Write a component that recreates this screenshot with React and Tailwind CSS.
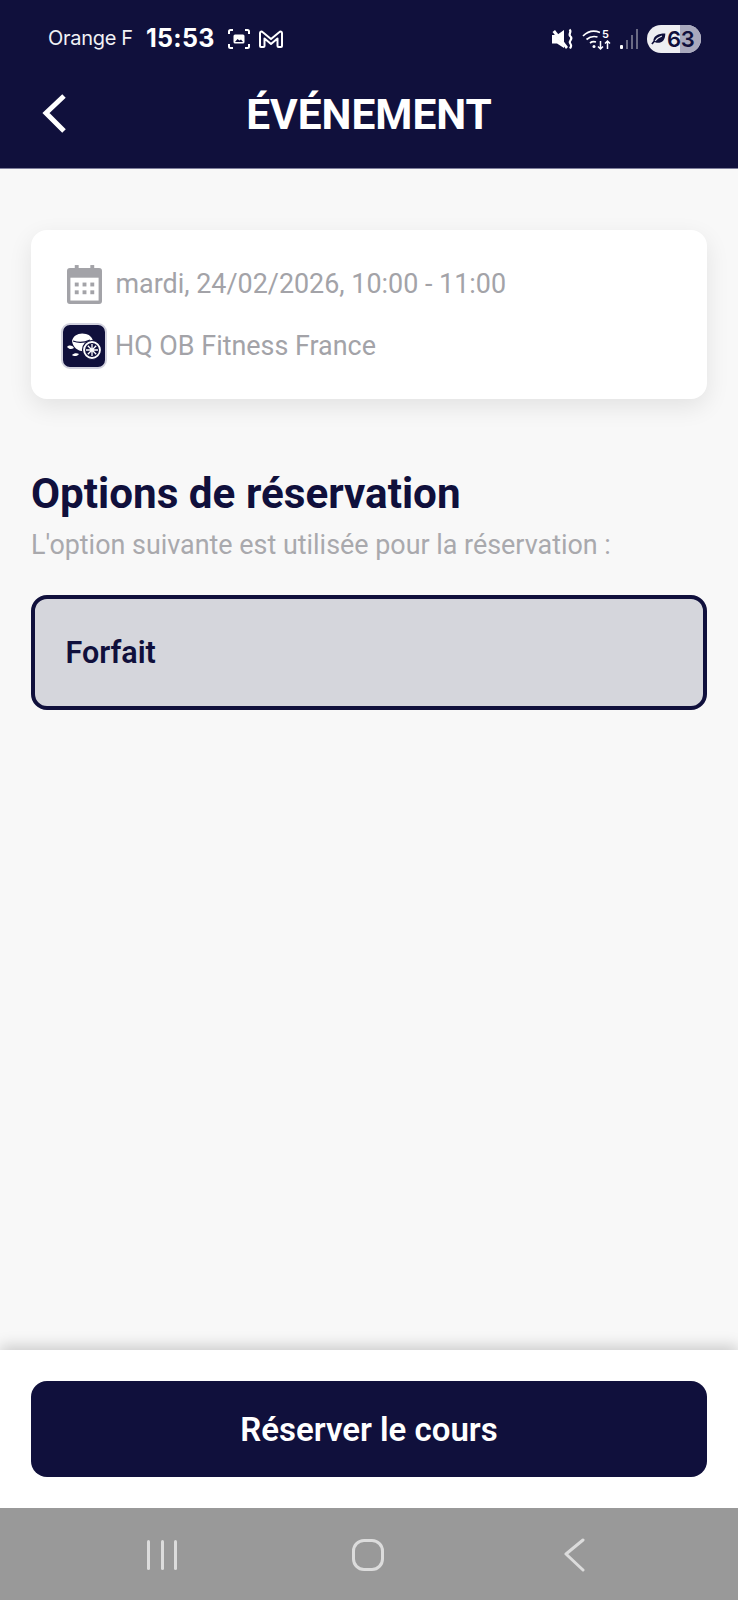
import React from 'react';

const StatusBar = () => (
  <div className="flex items-center justify-between h-[76px] pl-[48px] pr-[37px] pt-[1px]">
    <div className="flex items-center">
      <span className="font-['Inter'] text-[20px] tracking-[-0.3px] text-[#f1f1f5] w-[98px] mt-[-2px]">Orange F</span>
      <span className="font-['Inter'] text-[25px] font-bold tracking-[0.3px] text-white w-[80px]">15:53</span>
      <svg width="24" height="24" viewBox="0 0 24 24" fill="none" stroke="white" strokeWidth="2" className="ml-[1px]">
        <path d="M2 7V4.500A1.500 1.500 0 0 1 3.500 3H6M18 3h2.500A1.500 1.500 0 0 1 22 4.500V7M22 17v2.500a1.500 1.500 0 0 1-1.500 1.500H18M6 21H3.500A1.500 1.500 0 0 1 2 19.500V17" />
        <rect x="6.500" y="7.500" width="11" height="9" rx="1.500" fill="white" stroke="none" />
        <path d="M8 15l2.500-3 2 1.500 1.500-1 2 2.500z" fill="#10103c" stroke="none" />
      </svg>
      <svg width="26" height="20" viewBox="0 0 26 20" fill="none" stroke="white" strokeWidth="2" strokeLinejoin="round" className="ml-[7px]">
        <path d="M2 17V4a1.500 1.500 0 0 1 2.500-1L13 10l8.500-7A1.500 1.500 0 0 1 24 4v13a1 1 0 0 1-1 1h-2.500a1 1 0 0 1-1-1V9.500L13 15l-6.500-5.500V17a1 1 0 0 1-1 1H3a1 1 0 0 1-1-1z" />
      </svg>
    </div>
    <div className="flex items-center">
      <svg width="24" height="24" viewBox="0 0 24 24" className="mr-[6px]">
        <path d="M0 8h5l7-5v18l-7-4.500H0z" fill="white" />
        <path d="M0 2l15 19" stroke="#10103c" strokeWidth="2" />
        <path d="M0.500 5L3 3l13 17-2 2z" fill="white" />
        <path d="M17.500 2.500c3 2.500-2 4.500 1 7s-2 4-.5 6.500 1.500 3 0 5.500" fill="none" stroke="white" strokeWidth="2.200" />
      </svg>
      <svg width="31" height="24" viewBox="0 0 31 24" fill="none" stroke="white" strokeWidth="1.700" className="mr-[7px]">
        <path d="M1 9c5-5 11-6 17-3.500M4.500 12.500c3.500-3 7.500-3.500 11-2.500M8 16c2-1.500 4-1.500 6-1" />
        <circle cx="12" cy="19.500" r="1.500" fill="white" stroke="none" />
        <path d="M18.500 14v8M16 19.500l2.500 2.500 2.500-2.500M25.500 22v-8M23 16.500l2.500-2.500 2.500 2.500" strokeWidth="1.500" />
        <text x="20" y="11" fontFamily="Inter" fontSize="11" fontWeight="600" fill="white" stroke="none">5</text>
      </svg>
      <div className="flex items-end gap-[3px] h-[20px] mr-[9px]">
        <div className="w-[3px] h-[4px] rounded-[1px] bg-white" />
        <div className="w-[2px] h-[9px] bg-[#6a6a84]" />
        <div className="w-[2px] h-[14px] bg-[#6a6a84]" />
        <div className="w-[2px] h-[20px] bg-[#6a6a84]" />
      </div>
      <div className="relative flex items-center w-[54px] h-[28px] rounded-full overflow-hidden bg-[#eeeef2]">
        <div className="absolute right-0 top-0 bottom-0 w-[21px] bg-[#a9a9bd]" />
        <svg width="17" height="17" viewBox="0 0 20 18" className="relative ml-[3px]">
          <path d="M4 12C4 6 9 3 18 3c0 7-3 11-9 11-1.500 0-3-.500-3.500-1L3 16l-1.500-1z" fill="#10103c" />
          <path d="M6 12c2-3 5-5 8-6" stroke="#eeeef2" strokeWidth="1.300" fill="none" />
        </svg>
        <span className="relative font-['Inter'] text-[22px] font-semibold tracking-[-0.4px] text-[#10103c] ml-[0px] leading-none">63</span>
      </div>
    </div>
  </div>
);

const CalendarIcon = () => (
  <svg width="35" height="39" viewBox="0 0 36 40" className="ml-[6px] shrink-0">
    <rect x="8" y="0" width="4" height="8" fill="#a3a3a8" />
    <rect x="24" y="0" width="4" height="8" fill="#a3a3a8" />
    <path d="M3 3h30a3 3 0 0 1 3 3v31a3 3 0 0 1-3 3H3a3 3 0 0 1-3-3V6a3 3 0 0 1 3-3z" fill="#a3a3a8" />
    <rect x="3.500" y="13" width="29" height="23.500" fill="white" />
    <g fill="#a3a3a8">
      <rect x="8" y="18" width="4" height="4" />
      <rect x="16" y="18" width="4" height="4" />
      <rect x="24" y="18" width="4" height="4" />
      <rect x="8" y="26" width="4" height="4" />
      <rect x="16" y="26" width="4" height="4" />
      <rect x="24" y="26" width="4" height="4" />
    </g>
  </svg>
);

const StudioLogo = () => (
  <div className="w-[46px] h-[46px] shrink-0 rounded-[9px] bg-[#10103c] border-2 border-[#d3d3df] flex items-center justify-center">
    <svg width="36" height="30" viewBox="0 0 36 30">
      <path d="M6 10C7 4 14 1 20 3c4 1 7 4 7 8-4 1-7 4-8 9-6 1-12-3-13-10z" fill="white" />
      <path d="M7 10c5 2 11 2 17-1" stroke="#10103c" strokeWidth="1.200" fill="none" />
      <circle cx="26" cy="19" r="9.500" fill="white" stroke="#10103c" strokeWidth="1.200" />
      <circle cx="26" cy="19" r="7" fill="#10103c" />
      <path d="M26 13v12M20 19h12M21.800 14.800l8.400 8.400M30.200 14.800l-8.400 8.400" stroke="white" strokeWidth="1.300" />
      <path d="M1 16c2-2 5-2 7 1-3 2-5 1-7-1z" fill="white" />
      <path d="M6 24c2-2 5-2 7-1-1 2-5 3-7 1z" fill="white" />
    </svg>
  </div>
);

const App = () => {
  return (
    <div className="flex flex-col h-[1600px] w-[738px] overflow-hidden bg-[#f8f8f8] font-['Roboto',sans-serif]">
      {/* header */}
      <div className="h-[169px] shrink-0 bg-[#10103c] border-b border-[#7f7f9c]">
        <StatusBar />
        <div className="relative flex items-center justify-center h-[62px] mt-[8px]">
          <svg width="24" height="40" viewBox="0 0 24 40" fill="none" stroke="white" strokeWidth="5" className="absolute left-[42px] top-[10px]">
            <path d="M22 2L4 19l18 18" />
          </svg>
          <h1 className="text-[42.4px] font-bold text-white">ÉVÉNEMENT</h1>
        </div>
      </div>

      {/* content */}
      <div className="flex-1 px-[31px] pt-[61px]">
        <div className="bg-white rounded-[16px] h-[169px] pl-[30px] pt-[35px] shadow-[0_8px_24px_rgba(0,0,0,0.09)]">
          <div className="flex items-center h-[39px]">
            <CalendarIcon />
            <span className="ml-[13.5px] text-[26.9px] text-[#a3a3a8]">mardi, 24/02/2026, 10:00 - 11:00</span>
          </div>
          <div className="flex items-center h-[46px] mt-[19px]">
            <StudioLogo />
            <span className="ml-[8px] text-[26.9px] text-[#a3a3a8]">HQ OB Fitness France</span>
          </div>
        </div>

        <h2 className="mt-[67px] text-[42.2px] leading-[56px] font-bold text-[#10103c]">Options de réservation</h2>
        <p className="mt-[5px] text-[26.9px] leading-[36px] text-[#a9a9ad]">L'option suivante est utilisée pour la réservation :</p>

        <div className="mt-[32px] h-[115px] flex items-center pl-[30.5px] rounded-[16px] border-[4px] border-[#10103c] bg-[#d5d6dc]">
          <span className="text-[30.5px] font-semibold text-[#10103c]">Forfait</span>
        </div>
      </div>

      {/* bottom action */}
      <div className="h-[158px] shrink-0 bg-white px-[31px] pt-[31px] shadow-[0_-4px_14px_rgba(0,0,0,0.18)] z-10">
        <button className="w-full h-[96px] rounded-[16px] bg-[#10103c] text-white text-[33px] font-semibold pt-[1px]">Réserver le cours</button>
      </div>

      {/* android nav */}
      <div className="h-[92px] shrink-0 bg-[#999999] z-10 relative">
        <div className="flex items-center justify-center gap-[10.5px] absolute left-[147px] top-[32px] h-[30px]">
          <div className="w-[3px] h-[30px] bg-[#dcdcdc] rounded-full" />
          <div className="w-[3px] h-[30px] bg-[#dcdcdc] rounded-full" />
          <div className="w-[3px] h-[30px] bg-[#dcdcdc] rounded-full" />
        </div>
        <div className="absolute left-[352px] top-[31px] w-[32px] h-[32px] rounded-[12px] border-[3px] border-[#dcdcdc]" />
        <svg width="24" height="34" viewBox="0 0 24 34" fill="none" stroke="#dcdcdc" strokeWidth="3" strokeLinecap="round" strokeLinejoin="round" className="absolute left-[562px] top-[30px]">
          <path d="M21 2L4 16l17 16" />
        </svg>
      </div>
    </div>
  );
};

export default App;
